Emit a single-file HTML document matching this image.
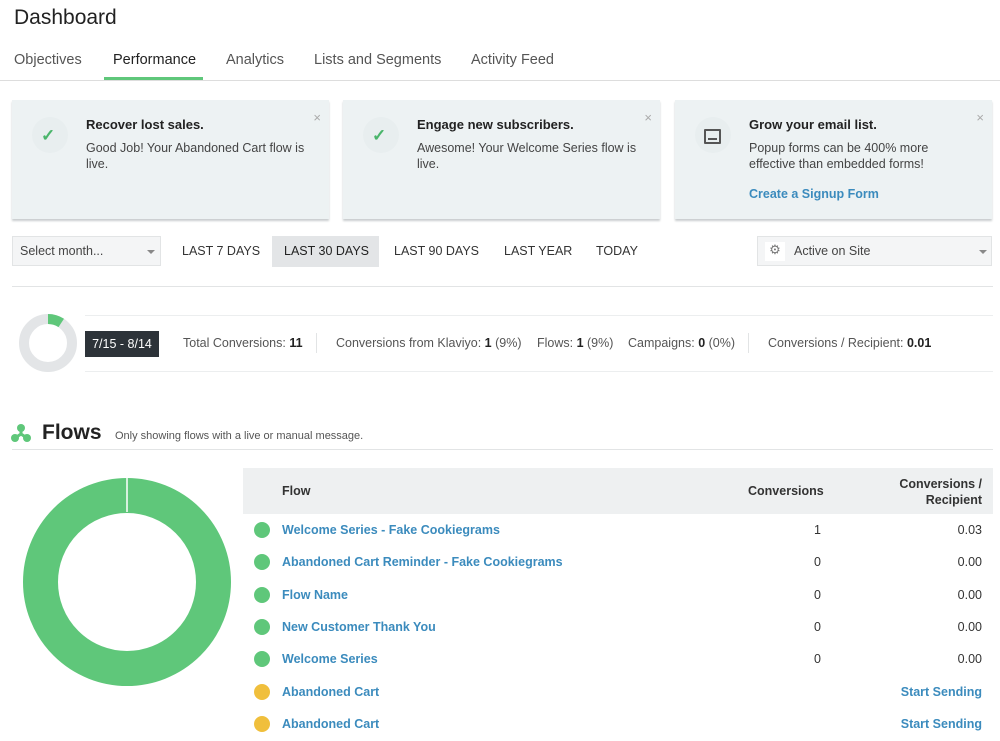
<!DOCTYPE html>
<html><head><style>
*{margin:0;padding:0;box-sizing:border-box}
body{width:1000px;height:741px;overflow:hidden;background:#fff;font-family:"Liberation Sans",sans-serif;color:#333;position:relative}
.a{position:absolute;white-space:nowrap}
.card{position:absolute;top:100px;width:317px;height:119px;background:#edf2f3;box-shadow:0 2px 2px #c9cdcf}
.card .ic{position:absolute;left:20px;top:17px;width:36px;height:36px;border-radius:50%;background:#e8eeef}
.card h4{position:absolute;left:74px;top:17px;font-size:13px;color:#222}
.card p{position:absolute;left:74px;top:40px;font-size:12.5px;line-height:16px;color:#444;width:235px;white-space:normal}
.card .x{position:absolute;right:8px;top:10px;color:#aaa;font-size:13px}
.tab{font-size:14.5px;color:#555;top:52px}
.rng{font-size:12.5px;color:#333;top:244px}
.row{position:absolute;left:243px;width:750px;height:32px;font-size:12.5px}
.row .d{position:absolute;left:11px;top:8px;width:16px;height:16px;border-radius:50%;background:#5fc77a}
.row .n{position:absolute;left:39px;top:9px;color:#3b8bbd;font-weight:bold}
.row .c{position:absolute;right:172px;top:9px;color:#333}
.row .r{position:absolute;right:11px;top:9px;color:#333}
.row .s{position:absolute;right:11px;top:9px;color:#3b8bbd;font-weight:bold}
</style></head><body>
<div class="a" style="left:14px;top:6px;font-size:21px;color:#222">Dashboard</div>
<div class="a tab" style="left:14px">Objectives</div>
<div class="a tab" style="left:113px;color:#222">Performance</div>
<div class="a tab" style="left:226px">Analytics</div>
<div class="a tab" style="left:314px">Lists and Segments</div>
<div class="a tab" style="left:471px">Activity Feed</div>
<div class="a" style="left:0;top:80px;width:1000px;height:1px;background:#ddd"></div>
<div class="a" style="left:104px;top:77px;width:99px;height:3px;background:#5fc77a"></div>

<div class="card" style="left:12px"><div class="ic"></div><div class="a" style="left:29px;top:26px;color:#4ab56b;font-size:17px;font-weight:bold">✓</div><h4>Recover lost sales.</h4><p>Good Job! Your Abandoned Cart flow is live.</p><span class="x">×</span></div>
<div class="card" style="left:343px"><div class="ic"></div><div class="a" style="left:29px;top:26px;color:#4ab56b;font-size:17px;font-weight:bold">✓</div><h4>Engage new subscribers.</h4><p>Awesome! Your Welcome Series flow is live.</p><span class="x">×</span></div>
<div class="card" style="left:675px"><div class="ic"></div><div class="a" style="left:29px;top:29px;width:17px;height:15px;border:2px solid #555;border-radius:1px"><div style="position:absolute;left:2px;bottom:2px;width:9px;height:2px;background:#555"></div></div><h4>Grow your email list.</h4><p style="width:195px">Popup forms can be 400% more effective than embedded forms!</p><div class="a" style="left:74px;top:87px;font-size:12.5px;font-weight:bold;color:#3b8bbd">Create a Signup Form</div><span class="x">×</span></div>

<div class="a" style="left:12px;top:236px;width:149px;height:30px;background:#f4f5f6;border:1px solid #e2e4e5"></div>
<div class="a" style="left:20px;top:244px;font-size:12.5px;color:#444">Select month...</div>
<div class="a" style="left:147px;top:250px;border:4px solid transparent;border-top-color:#888"></div>
<div class="a" style="left:272px;top:236px;width:107px;height:31px;background:#e3e5e7"></div>
<div class="a rng" style="left:182px">LAST 7 DAYS</div>
<div class="a rng" style="left:284px;color:#222">LAST 30 DAYS</div>
<div class="a rng" style="left:394px">LAST 90 DAYS</div>
<div class="a rng" style="left:504px">LAST YEAR</div>
<div class="a rng" style="left:596px">TODAY</div>
<div class="a" style="left:757px;top:236px;width:235px;height:30px;background:#f4f5f6;border:1px solid #e2e4e5"></div>
<div class="a" style="left:765px;top:242px;width:20px;height:19px;background:#fff;color:#777;font-size:13px;text-align:center">⚙</div>
<div class="a" style="left:794px;top:244px;font-size:12.5px;color:#444">Active on Site</div>
<div class="a" style="left:979px;top:250px;border:4px solid transparent;border-top-color:#888"></div>
<div class="a" style="left:12px;top:286px;width:981px;height:1px;background:#e2e4e5"></div>

<div class="a" style="left:85px;top:315px;width:908px;height:1px;background:#eceeef"></div>
<div class="a" style="left:85px;top:371px;width:908px;height:1px;background:#eceeef"></div>
<svg class="a" style="left:18px;top:313px" width="60" height="60"><circle cx="30" cy="30" r="24" fill="none" stroke="#e3e5e7" stroke-width="10"/><circle cx="30" cy="30" r="24" fill="none" stroke="#5fc77a" stroke-width="10" stroke-dasharray="14 200" transform="rotate(-90 30 30)"/></svg>
<div class="a" style="left:85px;top:331px;width:74px;height:26px;background:#2d3339;color:#fff;font-size:12.5px;text-align:center;line-height:26px">7/15 - 8/14</div>
<div class="a" style="left:183px;top:336px;font-size:12.5px;color:#555">Total Conversions: <b style="color:#222">11</b></div>
<div class="a" style="left:316px;top:333px;width:1px;height:20px;background:#e2e4e5"></div>
<div class="a" style="left:336px;top:336px;font-size:12.5px;color:#555">Conversions from Klaviyo: <b style="color:#222">1</b> (9%)</div>
<div class="a" style="left:537px;top:336px;font-size:12.5px;color:#555">Flows: <b style="color:#222">1</b> (9%)</div>
<div class="a" style="left:628px;top:336px;font-size:12.5px;color:#555">Campaigns: <b style="color:#222">0</b> (0%)</div>
<div class="a" style="left:748px;top:333px;width:1px;height:20px;background:#e2e4e5"></div>
<div class="a" style="left:768px;top:336px;font-size:12.5px;color:#555">Conversions / Recipient: <b style="color:#222">0.01</b></div>

<svg class="a" style="left:10px;top:423px" width="22" height="20"><g stroke="#5fc77a" stroke-width="3"><line x1="11" y1="5" x2="11" y2="11"/><line x1="11" y1="11" x2="5" y2="15"/><line x1="11" y1="11" x2="17" y2="15"/></g><circle cx="11" cy="5" r="4" fill="#5fc77a"/><circle cx="5" cy="15" r="4" fill="#5fc77a"/><circle cx="17" cy="15" r="4" fill="#5fc77a"/></svg>
<div class="a" style="left:42px;top:421px;font-size:21px;font-weight:bold;color:#222">Flows</div>
<div class="a" style="left:115px;top:430px;font-size:11px;color:#555">Only showing flows with a live or manual message.</div>
<div class="a" style="left:12px;top:449px;width:981px;height:1px;background:#e2e4e5"></div>

<svg class="a" style="left:21px;top:476px" width="212" height="212"><circle cx="106" cy="106" r="86.5" fill="none" stroke="#5fc77a" stroke-width="35"/><line x1="106" y1="0" x2="106" y2="36" stroke="#fff" stroke-width="1.5"/></svg>

<div class="a" style="left:243px;top:468px;width:750px;height:46px;background:#eef0f1"></div>
<div class="a" style="left:282px;top:484px;font-size:12.5px;font-weight:bold;color:#333">Flow</div>
<div class="a" style="left:748px;top:484px;font-size:12.5px;font-weight:bold;color:#333">Conversions</div>
<div class="a" style="right:18px;top:476px;font-size:12.5px;font-weight:bold;color:#333;text-align:right;line-height:16px">Conversions /<br>Recipient</div>

<div class="row" style="top:514px"><div class="d"></div><span class="n">Welcome Series - Fake Cookiegrams</span><span class="c">1</span><span class="r">0.03</span></div>
<div class="row" style="top:546px"><div class="d"></div><span class="n">Abandoned Cart Reminder - Fake Cookiegrams</span><span class="c">0</span><span class="r">0.00</span></div>
<div class="row" style="top:579px"><div class="d"></div><span class="n">Flow Name</span><span class="c">0</span><span class="r">0.00</span></div>
<div class="row" style="top:611px"><div class="d"></div><span class="n">New Customer Thank You</span><span class="c">0</span><span class="r">0.00</span></div>
<div class="row" style="top:643px"><div class="d"></div><span class="n">Welcome Series</span><span class="c">0</span><span class="r">0.00</span></div>
<div class="row" style="top:676px"><div class="d" style="background:#f0bf3c"></div><span class="n">Abandoned Cart</span><span class="s">Start Sending</span></div>
<div class="row" style="top:708px"><div class="d" style="background:#f0bf3c"></div><span class="n">Abandoned Cart</span><span class="s">Start Sending</span></div>
</body></html>
